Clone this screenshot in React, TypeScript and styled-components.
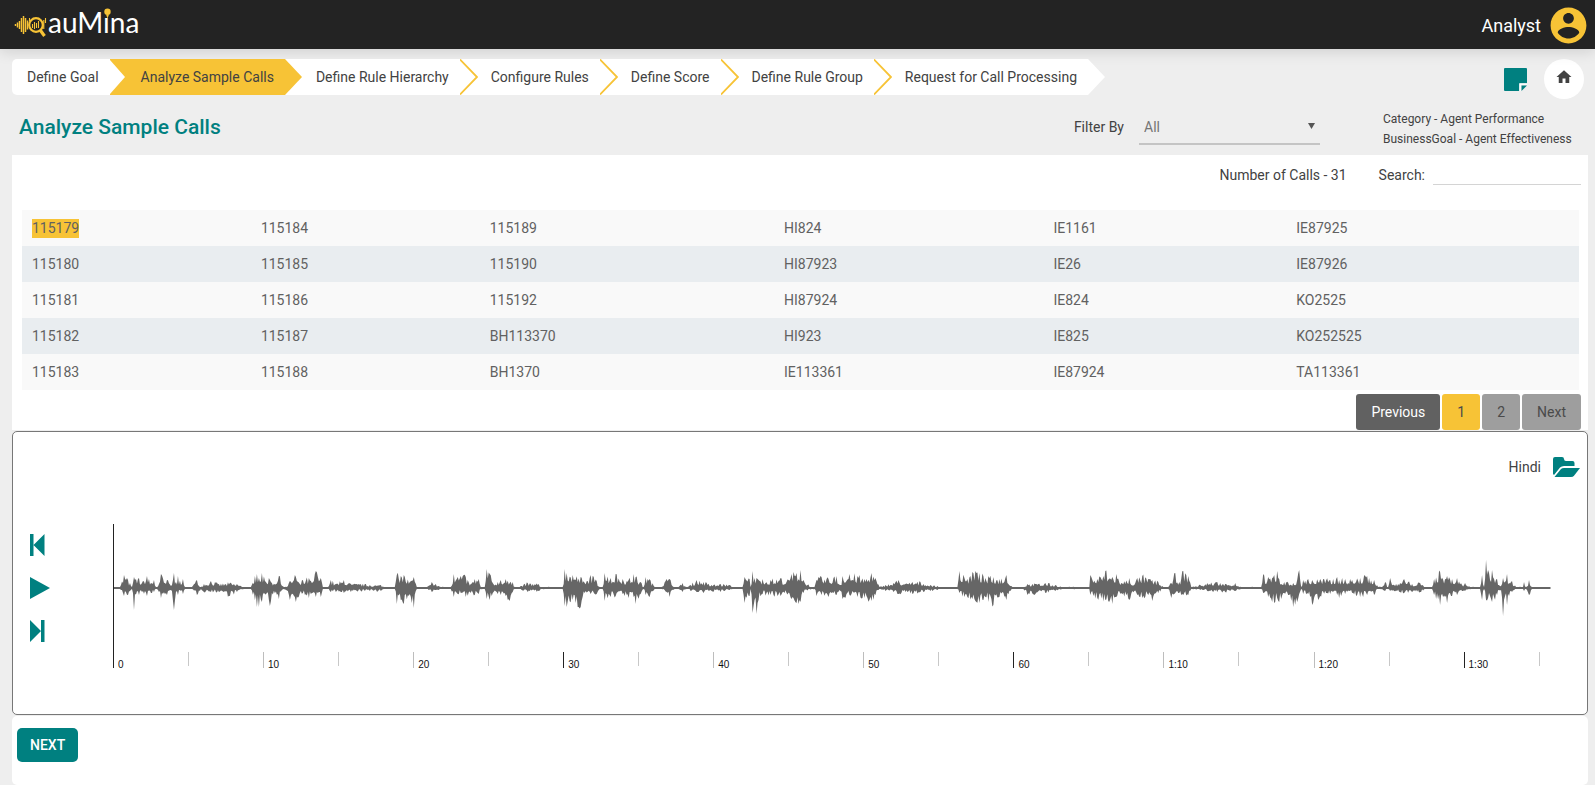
import React, { useState } from "react";
import styled, { createGlobalStyle } from "styled-components";

const teal = "#008080";
const amber = "#f7c336";
const ink = "#424242";

const GlobalStyle = createGlobalStyle`
  *, *::before, *::after { box-sizing: border-box; }
  body {
    margin: 0;
    background: #eeeeee;
    color: ${ink};
    font-family: Roboto, "Liberation Sans", sans-serif;
    font-size: 14px;
    line-height: 20px;
  }
  button, input, select { font: inherit; color: inherit; }
`;

const TopBar = styled.header`
  position: relative;
  display: flex;
  align-items: center;
  justify-content: space-between;
  height: 49px;
  padding: 0 5px 0 14px;
  background: #232323;
  box-shadow: 0 2px 14px rgba(0, 0, 0, 0.14);
`;

const LogoLink = styled.a`
  display: flex;
`;

const UserButton = styled.button`
  display: flex;
  align-items: center;
  gap: 6px;
  padding: 2px 0 0;
  border: 0;
  background: none;
  color: #ffffff;
  font-size: 18px;
  cursor: pointer;
  svg { fill: ${amber}; }
`;

const Main = styled.main`
  padding: 10px 7px 0 12px;
`;

const NavRow = styled.div`
  display: flex;
  justify-content: space-between;
  align-items: flex-start;
  height: 40px;
`;

const Steps = styled.ol`
  position: relative;
  display: flex;
  margin: 0;
  padding: 0;
  list-style: none;
`;

const Step = styled.li<{ $active: boolean; $first: boolean }>`
  display: flex;
  background: linear-gradient(${(p) => (p.$active ? amber : "#ffffff")} 0 0) left / calc(100% - 18px) 100% no-repeat;
  border-radius: ${(p) => (p.$first ? "5px 0 0 5px" : "0")};
`;

const StepLink = styled.a<{ $first: boolean }>`
  padding: 0 11px 0 ${(p) => (p.$first ? 15 : 13)}px;
  line-height: 36px;
  color: inherit;
  text-decoration: none;
  white-space: nowrap;
`;

const NavTools = styled.div`
  display: flex;
  align-items: center;
  gap: 17px;
  padding-right: 4px;
`;

const IconButton = styled.button`
  display: flex;
  padding: 0;
  border: 0;
  background: none;
  color: ${teal};
  cursor: pointer;
`;

const HomeLink = styled.a`
  display: flex;
  align-items: center;
  justify-content: center;
  width: 40px;
  height: 40px;
  padding-bottom: 4px;
  border-radius: 50%;
  background: #ffffff;
  color: ${ink};
`;

const TitleRow = styled.div`
  display: flex;
  align-items: center;
  height: 56px;
  padding: 0 14px 0 7px;
`;

const Title = styled.h1`
  flex: 1;
  margin: 0;
  color: ${teal};
  font-size: 21px;
  font-weight: 500;
`;

const FilterLabel = styled.label`
  margin-right: 15px;
`;

const SelectWrap = styled.div`
  position: relative;
  width: 181px;
  margin-right: 63px;
  svg {
    position: absolute;
    right: 5px;
    top: 14px;
    pointer-events: none;
  }
`;

const Select = styled.select`
  display: block;
  width: 100%;
  height: 36px;
  padding: 2px 20px 0 5px;
  border: 0;
  border-bottom: 2px solid #c4c4c4;
  border-radius: 0;
  background: transparent;
  color: #757575;
  appearance: none;
  outline: none;
`;

const Meta = styled.div`
  min-width: 191px;
  padding-top: 4px;
  font-size: 12px;
`;

const CallsPanel = styled.section`
  padding-top: 5px;
  background: #ffffff;
`;

const CallsTools = styled.div`
  display: flex;
  justify-content: flex-end;
  align-items: center;
  height: 30px;
  padding-right: 7px;
`;

const CallCount = styled.span`
  margin-right: 32px;
`;

const SearchInput = styled.input`
  width: 148px;
  height: 20px;
  margin-left: 8px;
  padding: 0;
  border: 0;
  border-bottom: 1px solid #d4d4d4;
  background: transparent;
  outline: none;
`;

const TableWrap = styled.div`
  padding: 20px 9px 4px 10px;
`;

const CallTable = styled.table`
  width: 100%;
  border-collapse: collapse;
  table-layout: fixed;
`;

const Row = styled.tr`
  height: 36px;
  background: #f9f9f9;
  &:nth-child(even) { background: #e9edf0; }
`;

const Cell = styled.td`
  padding: 0 10px;
  color: #616161;
`;

const CallId = styled.span<{ $selected: boolean }>`
  display: inline-block;
  line-height: 19px;
  background: ${(p) => (p.$selected ? amber : "transparent")};
`;

const Pager = styled.nav`
  display: flex;
  justify-content: flex-end;
  gap: 2px;
  padding-right: 7px;
`;

const PageButton = styled.button<{ $tone: "dark" | "current" | "plain" }>`
  height: 36px;
  padding: 0 15px;
  border: 0;
  border-radius: 3px;
  background: ${(p) => ({ dark: "#616161", current: amber, plain: "#9e9e9e" })[p.$tone]};
  color: ${(p) => (p.$tone === "dark" ? "#ffffff" : "#4a4a4a")};
`;

const PlayerPanel = styled.section`
  margin: 1px 0;
  height: 284px;
  border: 1px solid #777777;
  border-radius: 5px;
  background: #ffffff;
`;

const LanguageRow = styled.div`
  display: flex;
  justify-content: flex-end;
  align-items: center;
  gap: 12px;
  height: 92px;
  padding: 0 7px 23px 0;
`;

const PlayerBody = styled.div`
  display: flex;
`;

const Controls = styled.div`
  display: flex;
  flex-direction: column;
  gap: 21px;
  width: 100px;
  padding: 10px 0 0 17px;
`;

const Timeline = styled.div`
  flex: 1;
  padding-right: 36px;
`;

const Wave = styled.svg`
  display: block;
  width: 100%;
  height: 128px;
  border-left: 1px solid #222222;
`;

const Ruler = styled.div`
  display: flex;
`;

const Tick = styled.span<{ $span: number; $kind: "main" | "label" | "minor" }>`
  flex: ${(p) => p.$span} 1 0;
  min-width: 0;
  height: ${(p) => (p.$kind === "minor" ? 14 : 16)}px;
  padding-top: 5px;
  text-indent: 4px;
  border-left: 1px solid ${(p) => ({ main: "#222222", label: "#bdbdbd", minor: "#c8c8c8" })[p.$kind]};
  color: #111111;
  font: 10px/15px "Liberation Sans", Arial, sans-serif;
`;

const FooterPanel = styled.footer`
  padding: 12px 5px 23px;
  border-radius: 5px;
  background: #ffffff;
`;

const NextButton = styled.button`
  height: 34px;
  padding: 0 13px;
  border: 0;
  border-radius: 5px;
  background: ${teal};
  color: #ffffff;
  font-weight: 500;
`;

const steps = [
  "Define Goal",
  "Analyze Sample Calls",
  "Define Rule Hierarchy",
  "Configure Rules",
  "Define Score",
  "Define Rule Group",
  "Request for Call Processing",
];
const activeStep = 1;

const columnWidths = ["14.7%", "14.7%", "18.9%", "17.3%", "15.6%", "18.8%"];
const calls = [
  ["115179", "115184", "115189", "HI824", "IE1161", "IE87925"],
  ["115180", "115185", "115190", "HI87923", "IE26", "IE87926"],
  ["115181", "115186", "115192", "HI87924", "IE824", "KO2525"],
  ["115182", "115187", "BH113370", "HI923", "IE825", "KO252525"],
  ["115183", "115188", "BH1370", "IE113361", "IE87924", "TA113361"],
];

/* Envelope of the recording: position, height above and depth below the axis. */
const envelope: number[][] = [
  [0, 1, 1], [6, 1, 1], [10, 13, 8], [14, 8, 7], [18, 1, 1], [19, 5, 5], [20, 11, 22], [21, 8, 6], [25, 10, 7], [28, 5, 4],
  [33, 12, 8], [37, 5, 5], [40, 8, 4], [42, 1, 1], [45, 4, 4], [47, 14, 10], [51, 5, 6], [53, 8, 7], [58, 3, 3], [60, 15, 22],
  [62, 6, 4], [64, 12, 7], [67, 3, 3], [69, 9, 6], [71, 1, 1], [77, 1, 1], [83, 8, 7], [87, 1, 1], [90, 4, 4], [97, 7, 4],
  [105, 4, 4], [116, 5, 8], [123, 4, 4], [130, 1, 1], [137, 1, 1], [141, 12, 12], [143, 14, 19], [148, 15, 14], [151, 7, 6],
  [155, 10, 12], [156, 8, 18], [158, 5, 5], [165, 12, 11], [170, 1, 1], [174, 2, 3], [176, 7, 12], [181, 13, 9], [182, 11, 14],
  [186, 4, 5], [189, 8, 5], [195, 10, 10], [198, 5, 5], [202, 17, 9], [207, 10, 9], [209, 1, 1], [214, 1, 1], [217, 8, 4],
  [222, 4, 4], [230, 8, 5], [237, 4, 4], [247, 4, 3], [256, 3, 3], [267, 3, 3], [272, 1, 1], [281, 1, 1], [283, 13, 16],
  [287, 12, 12], [290, 13, 16], [296, 6, 6], [300, 11, 20], [303, 1, 1], [312, 1, 1], [318, 6, 4], [325, 2, 2], [330, 1, 1],
  [337, 1, 1], [340, 14, 9], [347, 12, 5], [352, 11, 9], [357, 4, 5], [361, 9, 7], [365, 9, 6], [367, 1, 1], [371, 1, 1],
  [373, 19, 11], [376, 14, 12], [379, 5, 5], [387, 8, 7], [392, 9, 8], [396, 5, 13], [399, 6, 4], [401, 1, 1], [404, 1, 1],
  [414, 5, 4], [425, 4, 3], [428, 1, 1], [449, 1, 1], [451, 19, 18], [453, 15, 19], [459, 13, 12], [467, 11, 19], [471, 5, 5],
  [477, 13, 6], [483, 7, 6], [486, 1, 1], [489, 1, 1], [491, 15, 13], [497, 10, 9], [502, 14, 8], [509, 9, 6], [515, 8, 10],
  [520, 14, 9], [522, 11, 16], [527, 6, 6], [530, 1, 1], [532, 11, 7], [536, 9, 9], [541, 1, 1], [547, 1, 1], [553, 9, 4],
  [556, 9, 9], [561, 1, 1], [565, 1, 1], [569, 5, 4], [573, 1, 1], [577, 3, 3], [583, 8, 4], [590, 6, 5], [598, 3, 3],
  [607, 4, 4], [616, 3, 2], [619, 1, 1], [629, 1, 1], [631, 11, 15], [636, 9, 8], [637, 1, 1], [639, 17, 25], [641, 10, 12],
  [643, 10, 26], [645, 8, 12], [649, 9, 6], [657, 8, 7], [667, 10, 8], [673, 6, 5], [678, 14, 11], [683, 15, 15],
  [687, 18, 14], [690, 8, 5], [698, 1, 1], [701, 1, 1], [703, 8, 8], [708, 11, 7], [715, 9, 9], [723, 12, 7], [727, 3, 3],
  [729, 12, 11], [736, 14, 7], [744, 12, 9], [751, 9, 10], [758, 15, 13], [762, 10, 7], [766, 1, 1], [772, 3, 3], [780, 5, 4],
  [785, 8, 6], [792, 4, 4], [799, 6, 6], [807, 6, 4], [817, 3, 3], [827, 1, 1], [844, 1, 1], [846, 17, 5], [851, 10, 9],
  [854, 9, 9], [859, 16, 11], [863, 15, 14], [866, 15, 15], [872, 10, 9], [880, 11, 17], [886, 9, 9], [893, 13, 12],
  [899, 1, 1], [910, 1, 1], [914, 4, 7], [922, 4, 6], [932, 5, 5], [942, 3, 3], [950, 1, 1], [976, 1, 1], [977, 13, 7],
  [984, 9, 10], [992, 17, 12], [999, 11, 16], [1003, 14, 9], [1008, 5, 5], [1016, 10, 12], [1021, 3, 3], [1024, 10, 7],
  [1029, 12, 10], [1035, 9, 7], [1039, 8, 13], [1045, 6, 5], [1050, 1, 1], [1055, 1, 1], [1058, 5, 10], [1062, 15, 5],
  [1066, 6, 5], [1070, 17, 7], [1075, 12, 7], [1078, 1, 1], [1087, 3, 2], [1094, 5, 3], [1104, 6, 4], [1112, 4, 4],
  [1122, 5, 3], [1128, 1, 1], [1148, 1, 1], [1150, 14, 5], [1153, 4, 3], [1155, 11, 9], [1161, 13, 15], [1164, 17, 10],
  [1166, 9, 14], [1171, 6, 5], [1180, 5, 19], [1184, 8, 14], [1186, 18, 6], [1188, 1, 1], [1190, 8, 6], [1195, 9, 6],
  [1199, 8, 17], [1207, 9, 8], [1217, 8, 6], [1224, 11, 7], [1226, 8, 10], [1232, 9, 6], [1239, 8, 5], [1247, 10, 9],
  [1254, 12, 7], [1261, 8, 7], [1265, 1, 1], [1270, 2, 2], [1272, 6, 3], [1275, 1, 1], [1277, 10, 3], [1281, 3, 3],
  [1287, 5, 4], [1291, 9, 5], [1299, 4, 4], [1307, 5, 4], [1312, 1, 1], [1319, 1, 1], [1321, 9, 7], [1327, 16, 17],
  [1332, 9, 9], [1334, 12, 15], [1339, 9, 8], [1344, 10, 7], [1349, 3, 3], [1352, 5, 3], [1358, 1, 1], [1367, 1, 1],
  [1369, 13, 12], [1371, 1, 1], [1373, 28, 12], [1375, 18, 10], [1377, 8, 8], [1379, 18, 14], [1384, 9, 7], [1388, 2, 2],
  [1390, 10, 28], [1392, 6, 8], [1394, 14, 17], [1396, 5, 8], [1399, 7, 4], [1403, 1, 1], [1410, 1, 1], [1411, 6, 3],
  [1413, 1, 1], [1416, 8, 7], [1419, 1, 1], [1438, 1, 1],
];

const axis = 64;

const buildWavePath = () => {
  const top: string[] = [];
  const bottom: string[] = [];
  let seed = 7;
  const jitter = () => {
    seed = (seed * 16807) % 2147483647;
    const r = seed / 2147483647;
    return 0.4 + 0.8 * r * r;
  };
  for (let i = 0; i < envelope.length - 1; i += 1) {
    const [x0, up0, down0] = envelope[i];
    const [x1, up1, down1] = envelope[i + 1];
    for (let x = x0; x < x1; x += 1) {
      const t = (x - x0) / (x1 - x0);
      const up = x === x0 ? up0 : (up0 + (up1 - up0) * t) * jitter();
      const down = x === x0 ? down0 : (down0 + (down1 - down0) * t) * jitter();
      top.push(`${x} ${(axis - Math.max(1, up)).toFixed(1)}`);
      bottom.unshift(`${x} ${(axis + Math.max(1, down)).toFixed(1)}`);
    }
  }
  return `M${top.join("L")}L1438 ${axis}L${bottom.join("L")}Z`;
};
const wavePath = buildWavePath();

const duration = 95.77;
const ticks = Array.from({ length: 20 }, (_, i) => i * 5);
const tickLabel = (s: number) => (s > 60 ? `${Math.floor(s / 60)}:${String(s % 60).padStart(2, "0")}` : String(s));

const logoBars = [[1, 2], [3, 5], [5, 8], [7, 14], [9, 18], [11, 14], [13, 9]];

const Logo = () => (
  <svg width="130" height="40" viewBox="0 0 130 40" role="img" aria-label="auMina">
    <g stroke={amber} fill="none">
      {logoBars.map(([x, h]) => (
        <path key={x} d={`M${x + 0.5} ${20 - h / 2}v${h}`} strokeWidth="1.500" />
      ))}
      <circle cx="22" cy="20" r="6.800" strokeWidth="2.200" />
      <path d="M26.500 25.500L30.500 31" strokeWidth="3.200" />
      <path d="M18.500 19v4M20.500 17v7M22.500 18v5M24.500 16v7M29.800 15v9M31.500 13v5M15.500 13v3" strokeWidth="1.100" />
    </g>
    <text x="34" y="28" fill="#ffffff" fontFamily="Lato, sans-serif" fontSize="28">
      auMina
    </text>
    <path d="M89 4h9v7h-9z" fill="#232323" />
    <circle cx="93.500" cy="6.800" r="3.200" fill={amber} />
    <path d="M92 9.500h3l-1.500 4z" fill={amber} />
  </svg>
);

const Chevron = ({ index }: { index: number }) => {
  const last = index === steps.length - 1;
  if (index === activeStep - 1) {
    return (
      <svg width="18" height="36" viewBox="0 0 18 36" aria-hidden="true">
        <path d="M0 0h18v36H0z" fill={amber} />
        <path d="M0 1L15 18L0 35z" fill="#ffffff" />
      </svg>
    );
  }
  return (
    <svg width="18" height="36" viewBox="0 0 18 36" aria-hidden="true">
      {!last && <path d="M0 0h18v36H0z" fill="#ffffff" />}
      <path d="M0 0L17 18L0 36z" fill={index === activeStep ? amber : "#ffffff"} />
      {index > activeStep && !last && <path d="M0 0.500L17 18L0 35.500" fill="none" stroke={amber} strokeWidth="1.800" />}
    </svg>
  );
};

export default function App() {
  const [selected, setSelected] = useState("115179");
  return (
    <>
      <GlobalStyle />
      <TopBar>
        <LogoLink href="#" aria-label="auMina">
          <Logo />
        </LogoLink>
        <UserButton type="button">
          Analyst
          <svg width="43" height="43" viewBox="0 0 24 24" aria-hidden="true">
            <path d="M12 2C6.480 2 2 6.480 2 12s4.480 10 10 10 10-4.480 10-10S17.520 2 12 2zm0 3c1.660 0 3 1.340 3 3s-1.340 3-3 3-3-1.340-3-3 1.340-3 3-3zm0 14.200c-2.500 0-4.710-1.280-6-3.220.030-1.990 4-3.080 6-3.080 1.990 0 5.970 1.090 6 3.080-1.290 1.940-3.500 3.220-6 3.220z" />
          </svg>
        </UserButton>
      </TopBar>
      <Main>
        <NavRow>
          <Steps>
            {steps.map((name, i) => (
              <Step key={name} $active={i === activeStep} $first={i === 0}>
                <StepLink href="#" $first={i === 0} aria-current={i === activeStep ? "step" : undefined}>
                  {name}
                </StepLink>
                <Chevron index={i} />
              </Step>
            ))}
          </Steps>
          <NavTools>
            <IconButton type="button" aria-label="Notes">
              <svg width="23" height="23" viewBox="0 0 23 23" aria-hidden="true">
                <path d="M1 0H22Q23 0 23 1V15.500H15.500V23H1Q0 23 0 22V1Q0 0 1 0z" fill={teal} />
                <path d="M16 23V16H23" fill="none" stroke="#ffffff" strokeWidth="1.500" />
                <path d="M17.500 17.500H23L17.500 23z" fill={teal} />
              </svg>
            </IconButton>
            <HomeLink href="#" aria-label="Home">
              <svg width="18" height="18" viewBox="0 0 24 24" fill="currentColor" aria-hidden="true">
                <path d="M10 20v-6h4v6h5v-8h3L12 3 2 12h3v8z" />
              </svg>
            </HomeLink>
          </NavTools>
        </NavRow>
        <TitleRow>
          <Title>Analyze Sample Calls</Title>
          <FilterLabel htmlFor="filter">Filter By</FilterLabel>
          <SelectWrap>
            <Select id="filter" defaultValue="All">
              <option>All</option>
            </Select>
            <svg width="7" height="6" viewBox="0 0 7 6" aria-hidden="true">
              <path d="M0 0h7L3.500 6z" fill="#555555" />
            </svg>
          </SelectWrap>
          <Meta>
            <div>Category - Agent Performance</div>
            <div>BusinessGoal - Agent Effectiveness</div>
          </Meta>
        </TitleRow>
        <CallsPanel>
          <CallsTools>
            <CallCount>Number of Calls - 31</CallCount>
            <label htmlFor="search">Search:</label>
            <SearchInput id="search" type="text" />
          </CallsTools>
          <TableWrap>
            <CallTable>
              <colgroup>
                {columnWidths.map((width, i) => (
                  <col key={i} style={{ width }} />
                ))}
              </colgroup>
              <tbody>
                {calls.map((row) => (
                  <Row key={row[0]}>
                    {row.map((id) => (
                      <Cell key={id} onClick={() => setSelected(id)}>
                        <CallId $selected={id === selected}>{id}</CallId>
                      </Cell>
                    ))}
                  </Row>
                ))}
              </tbody>
            </CallTable>
          </TableWrap>
          <Pager aria-label="Pages of calls">
            <PageButton type="button" $tone="dark">Previous</PageButton>
            <PageButton type="button" $tone="current" aria-current="page">1</PageButton>
            <PageButton type="button" $tone="plain">2</PageButton>
            <PageButton type="button" $tone="plain">Next</PageButton>
          </Pager>
        </CallsPanel>
        <PlayerPanel>
          <LanguageRow>
            <span>Hindi</span>
            <IconButton type="button" aria-label="Open folder">
              <svg width="27" height="20" viewBox="0 0 27 20" fill={teal} aria-hidden="true">
                <path d="M0 17V2Q0 0 2 0H9Q11 0 11 2Q11 4 13 4H19.500Q21.500 4 21.500 6V9H11Q8.500 9 7 10.500L1 18z" />
                <path d="M1.500 20L8 12Q9 11 11 11H27L21 18.800Q20 20 18 20z" />
              </svg>
            </IconButton>
          </LanguageRow>
          <PlayerBody>
            <Controls>
              <IconButton type="button" aria-label="Skip to start">
                <svg width="15" height="22" viewBox="0 0 15 22" fill={teal} aria-hidden="true">
                  <path d="M0 0h3.500v22H0zM14.500 0v22L3.500 11z" />
                </svg>
              </IconButton>
              <IconButton type="button" aria-label="Play">
                <svg width="20" height="22" viewBox="0 0 20 22" fill={teal} aria-hidden="true">
                  <path d="M0 0v22L20 11z" />
                </svg>
              </IconButton>
              <IconButton type="button" aria-label="Skip to end">
                <svg width="15" height="22" viewBox="0 0 15 22" fill={teal} aria-hidden="true">
                  <path d="M0 0v22L11 11zM11 0h3.500v22H11z" />
                </svg>
              </IconButton>
            </Controls>
            <Timeline>
              <Wave viewBox="0 0 1438 128" preserveAspectRatio="none" role="img" aria-label="Waveform of the call">
                <path d={wavePath} fill="#666666" />
              </Wave>
              <Ruler>
                {ticks.map((s) => (
                  <Tick
                    key={s}
                    $span={Math.min(5, duration - s)}
                    $kind={s % 30 === 0 ? "main" : s % 10 === 0 ? "label" : "minor"}
                  >
                    {s % 10 === 0 ? tickLabel(s) : ""}
                  </Tick>
                ))}
              </Ruler>
            </Timeline>
          </PlayerBody>
        </PlayerPanel>
        <FooterPanel>
          <NextButton type="button">NEXT</NextButton>
        </FooterPanel>
      </Main>
    </>
  );
}
